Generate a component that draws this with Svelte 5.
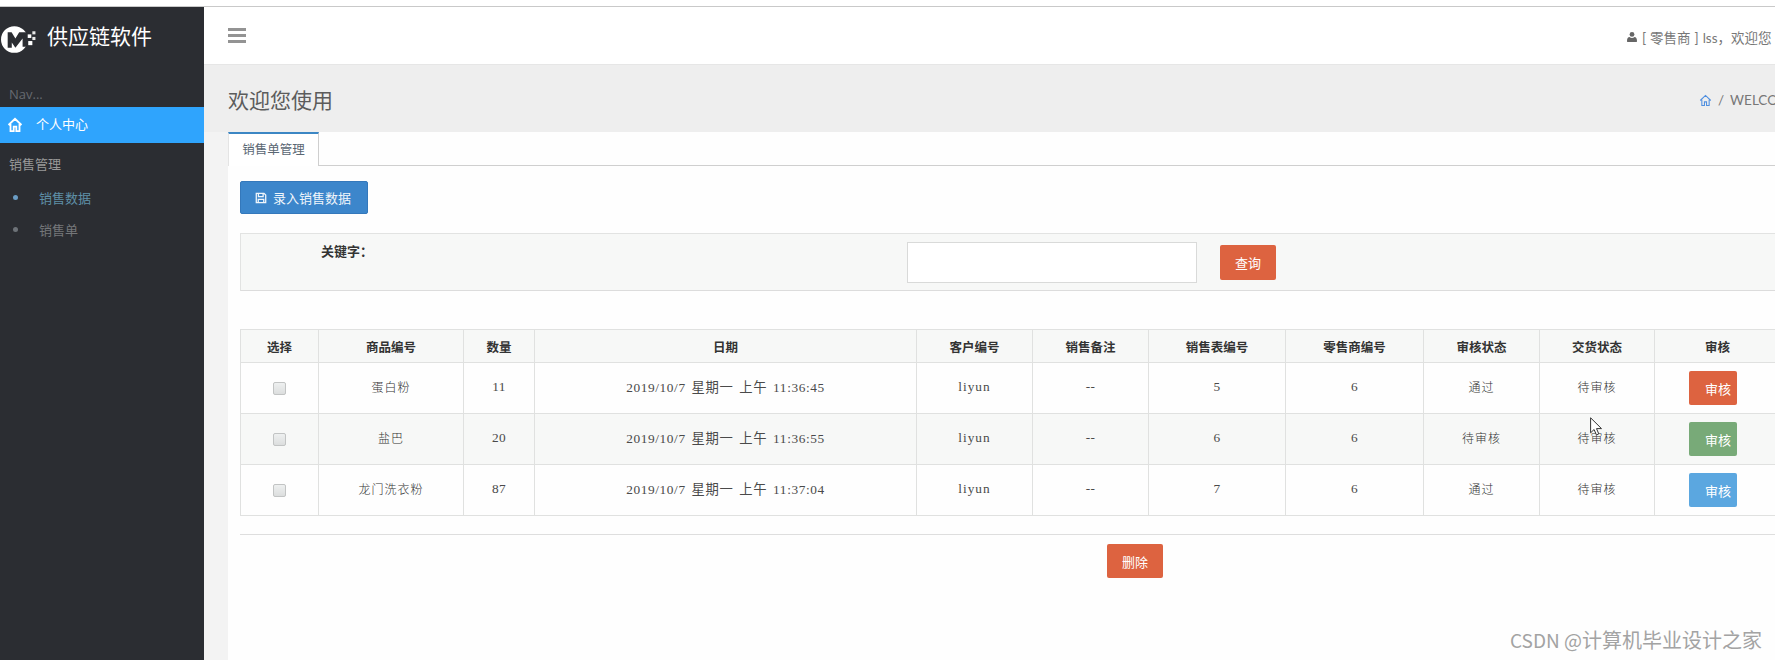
<script>
  const columns = [
    { label: '选择', cls: 'c-select' },
    { label: '商品编号', cls: 'c-goods' },
    { label: '数量', cls: 'c-qty' },
    { label: '日期', cls: 'c-date' },
    { label: '客户编号', cls: 'c-cust' },
    { label: '销售备注', cls: 'c-note' },
    { label: '销售表编号', cls: 'c-sale' },
    { label: '零售商编号', cls: 'c-shop' },
    { label: '审核状态', cls: 'c-audit' },
    { label: '交货状态', cls: 'c-deliver' },
    { label: '审核', cls: 'c-action' }
  ];
  const rows = [
    { goods: '蛋白粉', qty: '11', date: '2019/10/7 星期一 上午 11:36:45', sale: '5', audit: '通过', tone: 'red' },
    { goods: '盐巴', qty: '20', date: '2019/10/7 星期一 上午 11:36:55', sale: '6', audit: '待审核', tone: 'green' },
    { goods: '龙门洗衣粉', qty: '87', date: '2019/10/7 星期一 上午 11:37:04', sale: '7', audit: '通过', tone: 'blue' }
  ];
</script>

<div class="page">
  <aside class="sidebar">
    <div class="brand">
      <svg class="logo" viewBox="0 0 36 28" aria-hidden="true">
        <circle cx="13" cy="14" r="13" fill="#fff" />
        <path fill="#2b2d32" d="M6.500 22V7h3.800L14 13l3.700-6H27v14h-6v-8l-7 9-3.500-5v5z" />
        <rect x="26" y="9" width="3.500" height="3.500" fill="#fff" />
        <rect x="30.500" y="6" width="3" height="3" fill="#e8e8e8" />
        <rect x="30.500" y="11.500" width="3" height="3" fill="#e8e8e8" />
        <rect x="26.500" y="15.500" width="4" height="4" fill="#fff" />
      </svg>
      <span class="brand-name">供应链软件</span>
    </div>
    <div class="nav-label">Nav...</div>
    <a class="nav-active" href="#home">
      <svg class="home" viewBox="0 0 16 16" aria-hidden="true">
        <path d="M1.500 8 8 1.800 14.500 8M3.500 7v7.200h3.200v-4.500h2.600v4.500h3.200V7" />
      </svg>
      个人中心
    </a>
    <div class="nav-group">销售管理</div>
    <a class="nav-sub current" href="#data"><i></i>销售数据</a>
    <a class="nav-sub" href="#order"><i></i>销售单</a>
  </aside>

  <main class="main">
    <header class="topbar">
      <div class="burger"><span></span><span></span><span></span></div>
      <div class="user">
        <svg class="user-icon" viewBox="0 0 12 13" aria-hidden="true">
          <circle cx="6" cy="3.400" r="2.900" />
          <path d="M1 12.500c-.8 0-1-.5-1-1.200C0 8.500 1.200 6.600 3 6.600c.8.700 1.900 1 3 1s2.200-.3 3-1c1.800 0 3 1.900 3 4.700 0 .7-.2 1.200-1 1.200z" />
        </svg>
        <span class="user-text">[ 零售商 ] lss，欢迎您</span>
      </div>
    </header>

    <div class="titlebar">
      <h2>欢迎您使用</h2>
      <div class="crumbs">
        <svg class="crumb-home" viewBox="0 0 16 16" aria-hidden="true">
          <path d="M1.500 8 8 1.800 14.500 8M3.500 7v7.200h3.200v-4.500h2.600v4.500h3.200V7" />
        </svg>
        <span class="sep">/</span>
        <span class="crumb-text">WELCOME</span>
      </div>
    </div>

    <section class="panel">
      <div class="tabs"><div class="tab">销售单管理</div></div>
      <div class="content">
        <button class="add">
          <svg class="save" viewBox="0 0 14 14" aria-hidden="true">
            <path d="M1.500 1.500h9l2 2v9h-11zM4 1.500v4h5.500v-4M3.800 12.500V8.500h6.400v4" />
          </svg>
          录入销售数据
        </button>

        <div class="search">
          <label class="kw" for="kw">关键字：</label>
          <input id="kw" type="text" />
          <button class="btn red query">查询</button>
        </div>

        <table>
          <colgroup>
            {#each columns as c}<col class={c.cls} />{/each}
          </colgroup>
          <thead>
            <tr>{#each columns as c}<th>{c.label}</th>{/each}</tr>
          </thead>
          <tbody>
            {#each rows as r}
              <tr>
                <td class="sel"><span class="check"></span></td>
                <td class="wide">{r.goods}</td>
                <td>{r.qty}</td>
                <td class="date">{r.date}</td>
                <td class="name">liyun</td>
                <td>--</td>
                <td>{r.sale}</td>
                <td>6</td>
                <td class="wide">{r.audit}</td>
                <td class="wide">待审核</td>
                <td class="act"><button class="btn audit {r.tone}">审核</button></td>
              </tr>
            {/each}
          </tbody>
        </table>

        <div class="footer">
          <button class="btn red del">删除</button>
        </div>
      </div>
    </section>
  </main>

  <svg class="cursor" viewBox="0 0 12 19" aria-hidden="true">
    <path d="M.6.800v15l3.500-3.300 2.300 5.400 2.400-1-2.300-5.300h5z" />
  </svg>
  <div class="watermark">CSDN @<span>计算机毕业设计之家</span></div>
</div>

<style>
  :global(body) {
    margin: 0;
    background: #fff;
    overflow: hidden;
  }
  .page {
    position: relative;
    display: grid;
    grid-template-columns: 204px 1fr;
    width: 1775px;
    height: 660px;
    box-sizing: border-box;
    padding-top: 7px;
    overflow: hidden;
    font-family: "Noto Sans CJK SC", "Liberation Sans", sans-serif;
    background: linear-gradient(#fff 6px, #c9c9c9 6px, #c9c9c9 7px, #fff 7px);
  }

  .sidebar {
    background: #2b2d32;
    color: #9a9a9a;
    font-size: 13px;
    display: flex;
    flex-direction: column;
  }
  .brand {
    height: 62px;
    display: flex;
    align-items: center;
    padding-left: 1px;
    gap: 9px;
  }
  .logo { width: 37px; height: 29px; flex: none; margin-top: 3px; }
  .brand-name { color: #fff; font-size: 21px; line-height: 1; margin-bottom: 5px; }
  .nav-label {
    color: #666a70;
    font-size: 13px;
    font-family: "Open Sans", sans-serif;
    padding-left: 9px;
    height: 38px;
    line-height: 50px;
    box-sizing: border-box;
  }
  .nav-active {
    height: 36px;
    box-sizing: border-box;
    padding: 0 0 3px 7px;
    background: #2fa4fd;
    color: #fff;
    display: flex;
    align-items: center;
    gap: 13px;
    text-decoration: none;
    font-size: 13px;
  }
  .home {
    width: 16px;
    height: 16px;
    fill: none;
    stroke: #fff;
    stroke-width: 1.800;
    margin-top: 2px;
  }
  .nav-group {
    color: #999;
    padding-left: 9px;
    margin-top: 10px;
    height: 21px;
    line-height: 21px;
    font-size: 13px;
  }
  .nav-sub {
    display: flex;
    align-items: center;
    height: 32px;
    padding-left: 13px;
    color: #75777a;
    text-decoration: none;
    font-size: 13px;
  }
  .nav-group + .nav-sub { margin-top: 7px; }
  .nav-sub i {
    width: 5px;
    height: 5px;
    border-radius: 50%;
    background: #6d7278;
    margin-right: 21px;
  }
  .nav-sub.current { color: #5f90a8; }
  .nav-sub.current i { background: #6a9cc4; }

  .main {
    min-width: 0;
    display: flex;
    flex-direction: column;
    background: #f3f3f3;
    overflow: hidden;
  }
  .topbar {
    height: 58px;
    flex: none;
    background: #fff;
    display: flex;
    justify-content: space-between;
    align-items: center;
    box-sizing: border-box;
    padding: 0 0 0 24px;
    border-bottom: 1px solid #e6e6e6;
  }
  .burger { display: flex; flex-direction: column; gap: 2.500px; }
  .burger span { width: 18px; height: 3.500px; background: #939393; }
  .user {
    display: flex;
    align-items: center;
    gap: 5px;
    margin-top: 2px;
    color: #777;
    font-size: 13.500px;
    width: 148px;
    white-space: nowrap;
    overflow: hidden;
  }
  .user-icon { width: 10px; height: 12px; fill: #666; flex: none; }
  .user-text { font-family: "Lato", "Noto Sans CJK SC", sans-serif; word-spacing: 0.500px; }

  .titlebar {
    height: 67px;
    flex: none;
    background: #eee;
    display: flex;
    justify-content: space-between;
    align-items: center;
    padding-left: 24px;
    white-space: nowrap;
    overflow: hidden;
  }
  h2 {
    margin: 0;
    font-size: 21px;
    font-weight: 400;
    color: #5c5c5c;
  }
  .crumbs {
    display: flex;
    align-items: center;
    width: 76px;
    overflow: hidden;
    margin-top: 3px;
    font-size: 13.500px;
    color: #777;
    font-family: "Lato", sans-serif;
  }
  .crumb-home {
    width: 13px;
    height: 13px;
    flex: none;
    fill: none;
    stroke: #4f8fe0;
    stroke-width: 1.300;
  }
  .sep { margin: 0 6px; flex: none; }

  .panel {
    flex: 1;
    margin-left: 24px;
    background: #fefefe;
    min-height: 0;
  }
  .tabs {
    height: 34px;
    box-sizing: border-box;
    border-bottom: 1px solid #cfcfcf;
    display: flex;
  }
  .tab {
    width: 91px;
    height: 34px;
    box-sizing: border-box;
    border-top: 2px solid #3c87c4;
    border-right: 1px solid #cfcfcf;
    border-left: 1px solid #e4e4e4;
    background: #fff;
    color: #5a6773;
    font-size: 12.500px;
    text-align: center;
    line-height: 30px;
  }
  .content { padding: 15px 0 0 12px; }

  button { font-family: inherit; cursor: pointer; }
  .add {
    display: flex;
    align-items: center;
    gap: 6px;
    width: 128px;
    height: 33px;
    padding: 0 0 0 14px;
    border: 1px solid #3478bb;
    border-radius: 2px;
    background: #3c86cb;
    color: #f0f6fb;
    font-size: 13px;
  }
  .save {
    width: 12px;
    height: 12px;
    flex: none;
    fill: none;
    stroke: #f0f6fb;
    stroke-width: 1.500;
  }

  .search {
    display: flex;
    align-items: flex-start;
    box-sizing: border-box;
    height: 58px;
    margin-top: 19px;
    background: #f7f8f7;
    border: 1px solid #e2e3e2;
    border-right: 0;
    border-bottom-color: #dcdcdc;
  }
  .kw {
    width: 666px;
    box-sizing: border-box;
    padding-left: 80px;
    margin-top: 7px;
    font-size: 13px;
    font-weight: 700;
    color: #333;
  }
  input {
    width: 290px;
    height: 41px;
    margin-top: 8px;
    box-sizing: border-box;
    border: 1px solid #d9dad9;
    background: #fff;
  }
  .btn {
    border: 0;
    border-radius: 2px;
    color: #fff;
    font-size: 13px;
    padding: 0;
  }
  .query { width: 56px; height: 35px; margin: 11px 0 0 23px; }
  .red { background: #dd6340; }
  .green { background: #78aa78; }
  .blue { background: #5ba7e0; }

  table {
    table-layout: fixed;
    border-collapse: collapse;
    width: 1540px;
    margin-top: 38px;
    font-size: 12.500px;
    color: #444;
    text-align: center;
  }
  .c-select { width: 78px; }
  .c-goods { width: 145px; }
  .c-qty { width: 71px; }
  .c-date { width: 382px; }
  .c-cust { width: 116px; }
  .c-note { width: 116px; }
  .c-sale { width: 137px; }
  .c-shop { width: 138px; }
  .c-audit { width: 116px; }
  .c-deliver { width: 115px; }
  .c-action { width: 126px; }
  th, td {
    border: 1px solid #e0e1e0;
    padding: 0;
  }
  th {
    height: 32px;
    background: #f7f8f7;
    color: #333;
    font-weight: 700;
    font-size: 12.500px;
  }
  td {
    height: 51px;
    box-sizing: border-box;
    padding-bottom: 3px;
    font-family: "Liberation Serif", "Noto Sans CJK SC", serif;
    font-size: 13.330px;
    letter-spacing: 0.300px;
    color: #4a4a4a;
  }
  td.wide { font-size: 12px; letter-spacing: 1px; font-weight: 300; color: #333; }
  td.date { letter-spacing: 0.600px; word-spacing: 2px; }
  td.name { letter-spacing: 1px; }
  td.sel { padding-bottom: 1px; }
  tbody tr:nth-child(2) td { background: #f7f8f7; }
  .check {
    display: inline-block;
    width: 11px;
    height: 11px;
    vertical-align: middle;
    border: 1px solid #c2c4c4;
    border-radius: 2px;
    background: linear-gradient(#eef0f0, #dcdede);
  }
  td.act { text-align: left; padding-bottom: 0; }
  .audit {
    width: 48px;
    height: 34px;
    margin-left: 34px;
    padding-left: 10px;
    font-family: "Noto Sans CJK SC", sans-serif;
    display: block;
    letter-spacing: 0;
  }

  .footer {
    margin-top: 18px;
    border-top: 1px solid #dedede;
    padding: 9px 0 0 867px;
  }
  .del { width: 56px; height: 34px; display: block; }

  .cursor {
    position: absolute;
    left: 1590px;
    top: 417px;
    width: 12px;
    height: 19px;
    fill: #fff;
    stroke: #333;
    stroke-width: 1;
  }
  .watermark {
    position: absolute;
    left: 1510px;
    top: 626px;
    font-size: 19px;
    line-height: 28px;
    color: #a3a3a3;
    white-space: nowrap;
  }
  .watermark span { font-size: 20px; }
</style>
